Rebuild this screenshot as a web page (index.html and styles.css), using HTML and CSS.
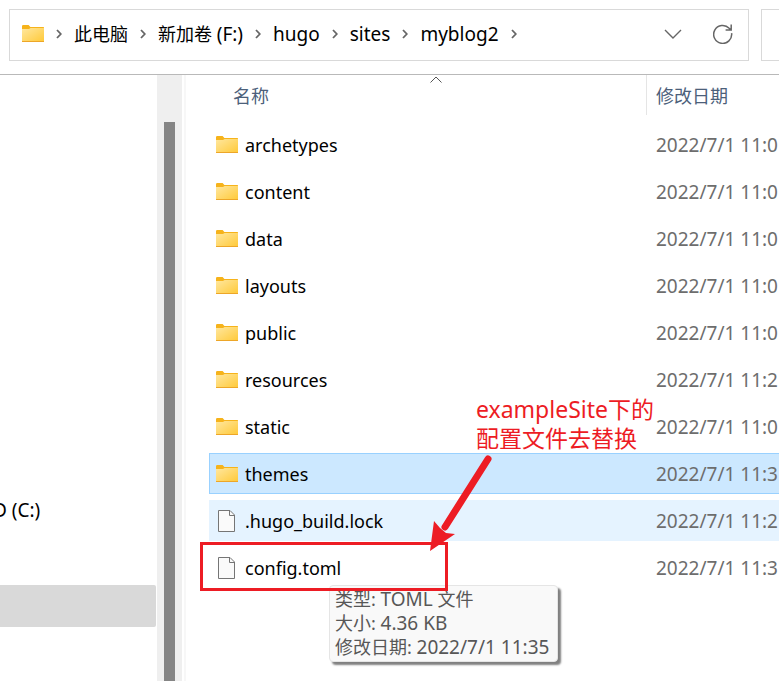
FILE: index.html
```html
<!DOCTYPE html>
<html lang="zh-CN">
<head>
<meta charset="utf-8">
<meta name="viewport" content="width=device-width, initial-scale=1">
<title>myblog2</title>
<link rel="stylesheet" href="styles.css">
</head>
<body>
<svg class="defs" aria-hidden="true">
  <defs>
    <linearGradient id="front" x1="0" y1="0" x2="1" y2="1">
      <stop offset="0" stop-color="#ffe79f"/>
      <stop offset="1" stop-color="#ffc937"/>
    </linearGradient>
    <symbol id="folder" viewBox="0 0 22 18">
      <path d="M0 1.2Q0 0 1.2 0H6.6L8.4 2H21.4Q22 2 22 2.6V6H0Z" fill="#f6b31b"/>
      <path d="M0 4H7L8.6 3H22V17H0Z" fill="url(#front)"/>
      <path d="M0 16H22V16.5Q22 17 21.4 17H.6Q0 17 0 16.5Z" fill="#eda628"/>
    </symbol>
    <symbol id="file" viewBox="0 0 18 22">
      <path d="M.5 .5H12L16.5 5V21.5H.5V.5Z" fill="#fafafa" stroke="#757575"/>
      <path d="M11.5 .5V5.5H16.5" fill="none" stroke="#757575"/>
    </symbol>
    <symbol id="next" viewBox="0 0 6 10">
      <path d="M1 1L4.8 5L1 9" fill="none" stroke="#666" stroke-width="1.8"/>
    </symbol>
  </defs>
</svg>

<header class="toolbar">
  <div class="address">
    <svg class="folder"><use href="#folder"/></svg>
    <svg class="next"><use href="#next"/></svg>
    <a class="crumb" href="#">此电脑</a>
    <svg class="next"><use href="#next"/></svg>
    <a class="crumb" href="#">新加卷 <span class="latin">(F:)</span></a>
    <svg class="next"><use href="#next"/></svg>
    <a class="crumb latin" href="#">hugo</a>
    <svg class="next"><use href="#next"/></svg>
    <a class="crumb latin" href="#">sites</a>
    <svg class="next"><use href="#next"/></svg>
    <a class="crumb latin" href="#">myblog2</a>
    <svg class="next"><use href="#next"/></svg>
    <div class="actions">
      <button type="button" aria-label="历史记录">
        <svg width="18" height="20" viewBox="0 0 18 20"><path d="M1 6L9 14L17 6" fill="none" stroke="#666" stroke-width="1.4"/></svg>
      </button>
      <button type="button" aria-label="刷新">
        <svg width="20" height="20" viewBox="0 0 20 20"><path d="M18.6 9.2A9 9 0 1 1 16.2 4.2L18 6M18.2 .5V6H12.6" fill="none" stroke="#666" stroke-width="1.5"/></svg>
      </button>
    </div>
  </div>
  <input class="search" type="search" aria-label="搜索">
</header>

<div class="content">
  <nav class="tree">
    <a class="node latin" href="#">D (C:)</a>
    <a class="node current" href="#" aria-label="新加卷 (F:)"></a>
  </nav>
  <div class="scrollbar"><div class="thumb"></div></div>

  <main class="files">
    <table>
      <thead>
        <tr>
          <th class="name" scope="col">名称<svg class="sort" viewBox="0 0 12 7"><path d="M.5 6.5L6 1L11.5 6.5" fill="none" stroke="#555"/></svg></th>
          <th class="date" scope="col">修改日期</th>
        </tr>
      </thead>
      <tbody>
        <tr><td><div class="entry"><svg class="folder"><use href="#folder"/></svg>archetypes</div></td><td class="date latin">2022/7/1 11:0</td></tr>
        <tr><td><div class="entry"><svg class="folder"><use href="#folder"/></svg>content</div></td><td class="date latin">2022/7/1 11:0</td></tr>
        <tr><td><div class="entry"><svg class="folder"><use href="#folder"/></svg>data</div></td><td class="date latin">2022/7/1 11:0</td></tr>
        <tr><td><div class="entry"><svg class="folder"><use href="#folder"/></svg>layouts</div></td><td class="date latin">2022/7/1 11:0</td></tr>
        <tr><td><div class="entry"><svg class="folder"><use href="#folder"/></svg>public</div></td><td class="date latin">2022/7/1 11:0</td></tr>
        <tr><td><div class="entry"><svg class="folder"><use href="#folder"/></svg>resources</div></td><td class="date latin">2022/7/1 11:2</td></tr>
        <tr><td><div class="entry"><svg class="folder"><use href="#folder"/></svg>static</div></td><td class="date latin">2022/7/1 11:0</td></tr>
        <tr class="selected"><td><div class="entry"><svg class="folder"><use href="#folder"/></svg>themes</div></td><td class="date latin">2022/7/1 11:3</td></tr>
        <tr class="hovered"><td><div class="entry"><svg class="file"><use href="#file"/></svg>.hugo_build.lock</div></td><td class="date latin">2022/7/1 11:2</td></tr>
        <tr><td><div class="entry"><svg class="file"><use href="#file"/></svg>config.toml</div></td><td class="date latin">2022/7/1 11:3</td></tr>
      </tbody>
    </table>

    <div class="tooltip" role="tooltip">
      <div>类型: <span class="latin">TOML</span> 文件</div>
      <div>大小: <span class="latin">4.36 KB</span></div>
      <div>修改日期: <span class="latin">2022/7/1 11:35</span></div>
    </div>
    <div class="outline"></div>
    <p class="note">exampleSite下的<br>配置文件去替换</p>
    <svg class="arrow" viewBox="0 0 64 98">
      <path d="M59 6L16 74" stroke="#ed1c24" stroke-width="7" stroke-linecap="round"/>
      <path d="M1 98L5 68L11 75L17 80L26 81Z" fill="#ed1c24"/>
    </svg>
  </main>
</div>
</body>
</html>
```

FILE: styles.css
```css
* {
  box-sizing: border-box;
}

body {
  margin: 0;
  height: 100vh;
  display: flex;
  flex-direction: column;
  overflow: hidden;
  background: #fff;
  color: #000;
  font: 18px/24px "Noto Sans", "Noto Sans CJK SC", sans-serif;
}

a {
  color: inherit;
  text-decoration: none;
}

svg {
  flex: none;
}

.defs {
  position: absolute;
  width: 0;
  height: 0;
}

.latin {
  font-size: 19px;
}

.folder {
  width: 22px;
  height: 18px;
}

.file {
  width: 18px;
  height: 22px;
  margin: 0 2px;
}

.toolbar {
  flex: none;
  display: flex;
  gap: 12px;
  height: 75px;
  padding: 9px 0 13px 9px;
  border-bottom: 1px solid #b9b9b9;
  overflow: hidden;
}

.address {
  flex: 1;
  display: flex;
  align-items: center;
  gap: 12px;
  padding: 0 15px 2px 12px;
  border: 1px solid #d9d9d9;
  white-space: nowrap;
}

.next {
  width: 6px;
  height: 10px;
}

.actions {
  display: flex;
  gap: 31px;
  margin-left: auto;
}

.actions button {
  display: flex;
  padding: 0;
  border: 0;
  background: none;
}

.search {
  flex: none;
  width: 18px;
  padding: 0;
  border: 1px solid #d9d9d9;
  border-right: 0;
  background: #fff;
}

.content {
  flex: 1;
  display: flex;
  min-height: 0;
}

.tree {
  width: 157px;
  padding: 414px 1px 0 0;
}

.node {
  display: block;
  height: 42px;
  margin: 0 0 54px -7px;
  border-radius: 2px;
  line-height: 42px;
}

.current {
  background: #d9d9d9;
}

.scrollbar {
  width: 25px;
  padding: 47px 7px 0;
  background: #efefef;
}

.thumb {
  height: 100%;
  background: #858585;
}

.files {
  position: relative;
  flex: 1;
  min-width: 0;
  margin-left: 2px;
  padding-left: 23px;
  border-left: 2px solid #f7f7f7;
}

table {
  width: 100%;
  table-layout: fixed;
  border-spacing: 0 6px;
  margin-top: -6px;
  white-space: nowrap;
}

th {
  position: relative;
  height: 43px;
  padding: 0 0 2px;
  color: #4c607a;
  font-weight: 400;
  text-align: left;
}

th.name {
  width: 437px;
  padding-left: 24px;
}

th.date::before {
  content: "";
  position: absolute;
  left: 0;
  top: 0;
  width: 1px;
  height: 40px;
  background: #e5e5e5;
}

.sort {
  position: absolute;
  top: 1px;
  left: calc(50% + 2px);
  width: 12px;
  height: 7px;
}

td {
  height: 41px;
  padding: 0;
  border: solid transparent;
  border-width: 1px 0;
}

td:first-child {
  border-left-width: 1px;
}

.date {
  padding-left: 10px;
}

td.date {
  color: #6d6d6d;
}

.entry {
  display: flex;
  align-items: center;
  gap: 7px;
  padding-left: 6px;
}

.selected td {
  background: #cce8ff;
  border-color: #99d1ff;
}

.hovered td {
  background: #e5f3ff;
}

.tooltip {
  position: absolute;
  left: 143px;
  top: 510px;
  padding: 1px 8px 2px 5px;
  border: 1px solid #e5e5e5;
  border-radius: 4px;
  background: #f9f9f9;
  box-shadow: 3px 3px 2px #808080;
  color: #575757;
  white-space: nowrap;
}

.outline {
  position: absolute;
  left: 14px;
  top: 467px;
  width: 248px;
  height: 49px;
  border: 3px solid #ed1c24;
}

.note {
  position: absolute;
  left: 290px;
  top: 320px;
  margin: 0;
  color: #ed1c24;
  font-size: 23px;
  line-height: 29px;
  white-space: nowrap;
}

.arrow {
  position: absolute;
  left: 243px;
  top: 378px;
  width: 64px;
  height: 98px;
}
```
